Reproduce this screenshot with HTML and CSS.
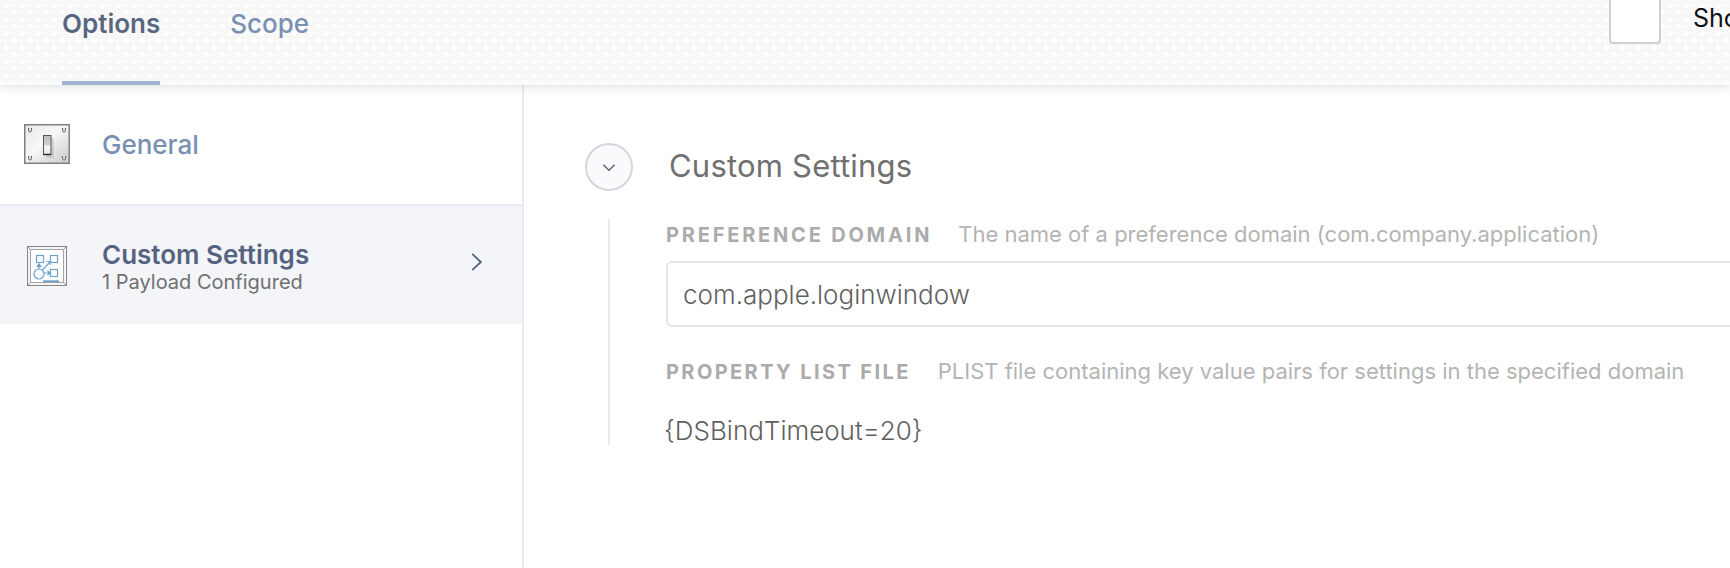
FILE: index.html
```html
<!DOCTYPE html>
<html lang="en">
<head>
  <meta charset="UTF-8">
  <title>Custom Settings</title>
  <link rel="stylesheet" href="styles.css">
</head>
<body>

  <div class="top-bar">
    <div class="tabs">
      <div class="tab active">Options</div>
      <div class="tab">Scope</div>
    </div>
    <div class="top-check">
      <div class="check-box"></div>
      <span class="check-label">Sho</span>
    </div>
  </div>

  <div class="main">
    <div class="side-panel">
      <div class="side-item first">
        <svg class="side-icon" viewBox="0 0 46 40">
          <defs>
            <linearGradient id="plate" x1="0" y1="0" x2="1" y2="1">
              <stop offset="0" stop-color="#e8e8e8"/>
              <stop offset="0.45" stop-color="#f8f8f8"/>
              <stop offset="1" stop-color="#c8c8c8"/>
            </linearGradient>
            <linearGradient id="toggle" x1="0" y1="0" x2="0" y2="1">
              <stop offset="0" stop-color="#bdbdbd"/>
              <stop offset="0.5" stop-color="#d0d0d0"/>
              <stop offset="0.55" stop-color="#f4f4f4"/>
              <stop offset="1" stop-color="#e8e8e8"/>
            </linearGradient>
          </defs>
          <rect x="0.75" y="0.75" width="44.5" height="38.5" fill="url(#plate)" stroke="#808080" stroke-width="1.5"/>
          <rect x="22" y="14" width="8" height="20" fill="#999" opacity="0.3"/>
          <rect x="19.5" y="11.5" width="7.5" height="19" fill="url(#toggle)" stroke="#555" stroke-width="1"/>
          <path d="M27 30.5H19.5" stroke="#222" stroke-width="1.4"/>
          <path d="M4.5 4v2.5a1.5 1.5 0 0 0 3 0V4M38.5 4v2.5a1.5 1.5 0 0 0 3 0V4M4.5 32v2.5a1.5 1.5 0 0 0 3 0V32M38.5 32v2.5a1.5 1.5 0 0 0 3 0V32" fill="#ddd" stroke="#666" stroke-width="1"/>
        </svg>
        <div class="side-text">
          <div class="side-title">General</div>
        </div>
      </div>
      <div class="side-item selected">
        <svg class="side-icon" viewBox="0 0 46 40">
          <rect x="3.5" y="0.5" width="39" height="39" fill="#f4f5f7" stroke="#868686"/>
          <path d="M3.5 0.5l3 3M42.5 0.5l-3 3M3.5 39.5l3-3M42.5 39.5l-3-3" stroke="#999"/>
          <rect x="6.5" y="3.5" width="33" height="33" fill="#fff" stroke="#a4a4a4"/>
          <g fill="none" stroke="#6ba3cf" stroke-width="1.2">
            <rect x="12.5" y="9.5" width="7" height="7"/>
            <rect x="26.5" y="9.5" width="7" height="7"/>
            <rect x="26.5" y="23.5" width="7" height="7"/>
            <circle cx="15" cy="28" r="5"/>
            <path d="M15 23V17.5M13 20.5l2-2.5 2 2.5M12.5 20.5h5M18.5 24l7.5-8M22.5 15.5h3.5v3.5M20 27h6M23.5 24.8l2.5 2.2-2.5 2.2"/>
          </g>
          <rect x="19" y="34.3" width="16" height="1.8" fill="#6ba3cf"/>
        </svg>
        <div class="side-text">
          <div class="side-title strong">Custom Settings</div>
          <div class="side-sub">1 Payload Configured</div>
        </div>
        <svg class="side-arrow" viewBox="0 0 12 18"><path d="M2 1.5l8 7.5-8 7.5" fill="none" stroke="#55637f" stroke-width="1.7"/></svg>
      </div>
    </div>

    <div class="content">
      <div class="section-head">
        <div class="round-btn">
          <svg viewBox="0 0 12 8"><path d="M1 1.5l5 5 5-5" fill="none" stroke="#55637f" stroke-width="1.2"/></svg>
        </div>
        <h2>Custom Settings</h2>
      </div>
      <div class="section-body">
        <div class="field-label"><b>PREFERENCE DOMAIN</b><span>The name of a preference domain (com.company.application)</span></div>
        <div class="text-box">com.apple.loginwindow</div>
        <div class="field-label second"><b>PROPERTY LIST FILE</b><span>PLIST file containing key value pairs for settings in the specified domain</span></div>
        <div class="field-value">{DSBindTimeout=20}</div>
      </div>
    </div>
  </div>

</body>
</html>
```

FILE: styles.css
```css
* {
  box-sizing: border-box;
  font-family: 'Inter', 'Lato', sans-serif;
}

html, body {
  height: 100%;
}

body {
  margin: 0;
  height: 568px;
  overflow: hidden;
  background: #fff;
  display: flex;
  flex-direction: column;
}

.top-bar {
  height: 85px;
  flex: none;
  display: flex;
  justify-content: space-between;
  padding-left: 62px;
  background-color: #fafafa;
  background-image:
    linear-gradient(transparent 81px, #fbfbfb 81px),
    radial-gradient(circle at 40% 40%, #fff 0, #fff 2px, #f5f5f5 4px, transparent 6px),
    radial-gradient(circle at 40% 40%, #fff 0, #fff 2px, #f5f5f5 4px, transparent 6px);
  background-size: 100% 100%, 16px 14px, 16px 14px;
  background-position: 0 0, 0 0, 8px 7px;
  box-shadow: 0 1px 9px rgba(110, 125, 135, 0.28);
  position: relative;
}

.tabs {
  display: flex;
  gap: 70px;
}

.tab {
  height: 85px;
  padding-top: 8px;
  font-size: 26px;
  font-weight: 500;
  color: #7890b2;
}

.tab.active {
  font-weight: 600;
  color: #596680;
  border-bottom: 4px solid #9db4d3;
}

.top-check {
  display: flex;
  width: 121px;
  flex: none;
  overflow: hidden;
}

.check-box {
  width: 52px;
  height: 44px;
  flex: none;
  margin-right: 32px;
  background: #fff;
  border: 2px solid #cfcfd8;
  border-top: none;
  border-radius: 0 0 4px 4px;
}

.check-label {
  font-size: 25px;
  padding-top: 3px;
  color: #111;
  white-space: nowrap;
}

.main {
  flex: 1;
  display: flex;
}

.side-panel {
  width: 524px;
  flex: none;
  padding-top: 10px;
  border-right: 2px solid #e8ebf0;
}

.side-item {
  display: flex;
  align-items: center;
  padding: 0 40px 0 24px;
  border-bottom: 2px solid #e7ebf1;
}

.side-item.first {
  height: 111px;
  padding-bottom: 11px;
}

.side-item.selected {
  height: 118px;
  background: #f3f5f9;
  border-bottom: none;
}

.side-item.selected .side-icon {
  margin-top: 2px;
}

.side-item.selected .side-text {
  margin-top: 3px;
}

.side-icon {
  width: 46px;
  height: 40px;
  flex: none;
  margin-right: 32px;
}

.side-text {
  flex: 1;
}

.side-title {
  font-size: 26px;
  font-weight: 500;
  color: #7890b2;
}

.side-title.strong {
  font-weight: 600;
  line-height: 30px;
  color: #56637f;
}

.side-sub {
  font-size: 20px;
  line-height: 24px;
  color: #707070;
}

.side-arrow {
  width: 13px;
  height: 20px;
  margin: 0 -1px 7px 0;
}

.content {
  flex: 1;
  padding: 58px 0 0 61px;
}

.section-head {
  display: flex;
  align-items: center;
}

.round-btn {
  width: 48px;
  height: 48px;
  flex: none;
  margin-right: 36px;
  border: 2px solid #d5d6dd;
  border-radius: 50%;
  background: #fafafc;
  display: flex;
  align-items: center;
  justify-content: center;
}

.round-btn svg {
  width: 14px;
  height: 9px;
}

h2 {
  margin: 0 0 4px;
  font-size: 31px;
  font-weight: 400;
  letter-spacing: 0.2px;
  color: #707070;
}

.section-body {
  margin: 28px 0 0 23px;
  padding: 1px 0 0 56px;
  border-left: 2px solid #e8e9ef;
  height: 226px;
}

.field-label {
  display: flex;
  align-items: baseline;
  font-size: 22px;
  line-height: 28px;
  color: #b4b4b4;
}

.field-label b {
  font-size: 20px;
  letter-spacing: 2.8px;
  font-weight: 700;
  color: #ababab;
  margin-right: 26px;
}

.field-label.second {
  margin-top: 30px;
}

.field-label.second b {
  letter-spacing: 2.4px;
  margin-right: 27px;
}

.text-box {
  width: 1200px;
  height: 66px;
  margin-top: 12px;
  padding-left: 15px;
  display: flex;
  align-items: center;
  font-size: 26px;
  font-weight: 300;
  color: #5f5f5f;
  border: 2px solid #e6e6e9;
  border-radius: 6px;
}

.field-value {
  margin: 29px 0 0 -2px;
  font-size: 26px;
  font-weight: 300;
  color: #5f5f5f;
}
```
